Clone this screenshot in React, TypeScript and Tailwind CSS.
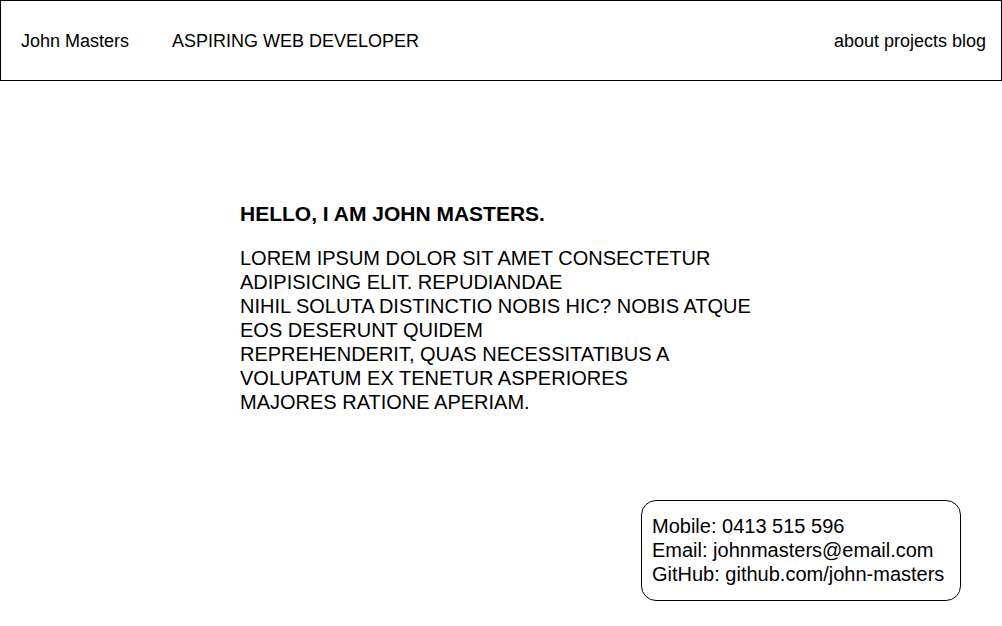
import React from "react";

export default function App() {
  return (
    <div className="min-h-[626px] bg-white text-black font-['Liberation_Sans',Arial,sans-serif] text-[18px] leading-[24px]">
      <header className="h-[81px] border border-black flex items-center pl-5 pr-[15px]">
        <span>John Masters</span>
        <span className="ml-[43px]">ASPIRING WEB DEVELOPER</span>
        <nav className="ml-auto">about projects blog</nav>
      </header>
      <main className="pl-[240px] pt-[121px]">
        <h1 className="font-bold text-[21px] leading-[24px]">HELLO, I AM JOHN MASTERS.</h1>
        <p className="mt-5 text-[20px] leading-[24px]">
          LOREM IPSUM DOLOR SIT AMET CONSECTETUR
          <br />
          ADIPISICING ELIT. REPUDIANDAE
          <br />
          NIHIL SOLUTA DISTINCTIO NOBIS HIC? NOBIS ATQUE
          <br />
          EOS DESERUNT QUIDEM
          <br />
          REPREHENDERIT, QUAS NECESSITATIBUS A
          <br />
          VOLUPATUM EX TENETUR ASPERIORES
          <br />
          MAJORES RATIONE APERIAM.
        </p>
      </main>
      <div className="ml-[641px] mt-[86px] w-[320px] border border-black rounded-[15px] pl-[10px] pt-[13px] pb-[14px] text-[20px] leading-[24px]">
        <div>Mobile: 0413 515 596</div>
        <div>Email: johnmasters@email.com</div>
        <div>GitHub: github.com/john-masters</div>
      </div>
    </div>
  );
}
